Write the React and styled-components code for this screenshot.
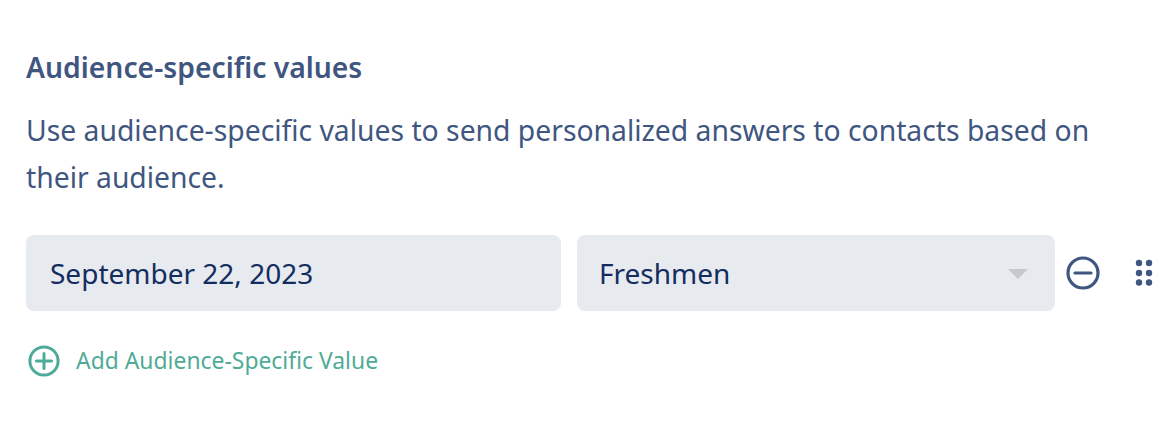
import React from 'react';
import styled, { createGlobalStyle } from 'styled-components';

const GlobalStyle = createGlobalStyle`
  html, body {
    margin: 0;
    padding: 0;
    background: #ffffff;
    font-family: 'Noto Sans', 'Open Sans', sans-serif;
  }
`;

const Page = styled.div`
  width: 1168px;
  height: 422px;
  box-sizing: border-box;
  padding: 48px 0 0 26px;
  overflow: hidden;
`;

const Title = styled.h3`
  margin: 0;
  font-size: 28.3px;
  line-height: 38px;
  font-weight: 600;
  color: #3f5680;
`;

const Description = styled.p`
  margin: 21px 0 0;
  width: 1090px;
  font-size: 28.3px;
  line-height: 47px;
  font-weight: 400;
  color: #3f5680;
`;

const ValueRow = styled.div`
  display: flex;
  align-items: center;
  margin-top: 34px;
`;

const Field = styled.div`
  box-sizing: border-box;
  display: flex;
  align-items: center;
  justify-content: space-between;
  width: ${props => props.$width}px;
  height: 76px;
  margin-right: ${props => props.$gap}px;
  padding: 0 27px 0 ${props => props.$pad}px;
  border-radius: 8px;
  background: #e7eaef;
  font-size: 28px;
  color: #142d5f;
`;

const Caret = styled.span`
  width: 0;
  height: 0;
  margin-top: 1px;
  border-left: 10px solid transparent;
  border-right: 10px solid transparent;
  border-top: 10px solid #c6c8cb;
`;

const IconButton = styled.button`
  display: flex;
  padding: 0;
  margin-right: ${props => props.$gap || 0}px;
  border: 0;
  background: none;
`;

const AddRow = styled.div`
  display: flex;
  align-items: center;
  gap: 16px;
  margin-top: 33px;
  margin-left: 2px;
  font-size: 22.9px;
  line-height: 34px;
  color: #4fab97;
`;

function CircleIcon({ color, plus, size }) {
  return (
    <svg width={size} height={size} viewBox="0 0 34 34" fill="none" stroke={color} strokeWidth="3.2">
      <circle cx="17" cy="17" r="15" />
      <path d="M9 17H25" strokeLinecap="round" />
      {plus && <path d="M17 9V25" strokeLinecap="round" />}
    </svg>
  );
}

function DragIcon() {
  const dots = [];
  [5, 15].forEach(cx => {
    [7, 17, 26.5].forEach(cy => {
      dots.push(<circle key={`${cx}-${cy}`} cx={cx} cy={cy} r="3.2" />);
    });
  });
  return (
    <svg width="20" height="34" viewBox="0 0 20 34" fill="#3f5680">
      {dots}
    </svg>
  );
}

export default function App() {
  return (
    <>
      <GlobalStyle />
      <Page>
        <Title>Audience-specific values</Title>
        <Description>
          Use audience-specific values to send personalized answers to contacts based on their audience.
        </Description>
        <ValueRow>
          <Field $width={535} $gap={16} $pad={24}>September 22, 2023</Field>
          <Field $width={478} $gap={11} $pad={22}>
            Freshmen
            <Caret />
          </Field>
          <IconButton $gap={34}>
            <CircleIcon color="#3f5680" size={34} />
          </IconButton>
          <IconButton>
            <DragIcon />
          </IconButton>
        </ValueRow>
        <AddRow>
          <CircleIcon color="#4fab97" plus size={32} />
          Add Audience-Specific Value
        </AddRow>
      </Page>
    </>
  );
}
